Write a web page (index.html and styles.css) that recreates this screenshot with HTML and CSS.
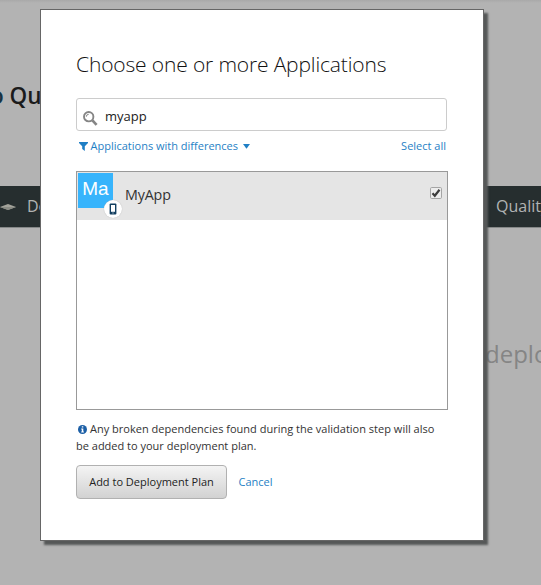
FILE: index.html
```html
<!DOCTYPE html>
<html lang="en">
<head>
<meta charset="utf-8">
<title>Choose one or more Applications</title>
<link rel="stylesheet" href="styles.css">
</head>
<body>
<div class="page">
  <header class="page-header"><span class="arrow-text">o</span> Qu</header>
  <nav class="nav">
    <svg class="diamond" width="16" height="8" viewBox="0 0 16 8"><path d="M0 4 8 1 16 4 8 7Z" fill="#a3a39b"/><path d="M0 4 8 7 16 4Z" fill="#898b84"/></svg>
    <span class="nav-first">De</span>
    <span class="nav-last">Quality</span>
  </nav>
  <main class="page-main">deploy</main>
</div>
<section class="modal" role="dialog">
  <h1 class="title">Choose one or more Applications</h1>
  <div class="search">
    <svg class="search-icon" width="16" height="16" viewBox="0 0 16 16" fill="none" stroke="#858585"><circle cx="5.700" cy="5.700" r="4.700" stroke-width="1.900"/><path d="M3.300 5.700A2.400 2.400 0 0 1 5.700 3.300" stroke-width="1"/><path d="m9.400 9.400 4.200 4.500" stroke-width="2.700"/></svg>
    <span class="query">myapp</span>
  </div>
  <div class="filters">
    <a class="filter"><svg class="funnel" width="9" height="9" viewBox="0 0 9 9"><path d="M0 0h9v1L5.800 4.300V9L3.200 7V4.300L0 1Z" fill="#1f7fc5"/></svg><span class="filter-label">Applications with differences</span><svg class="caret" width="7" height="5" viewBox="0 0 7 5"><path d="M0 0h7L3.500 4.800Z" fill="#1f7fc5"/></svg></a>
    <a class="select-all">Select all</a>
  </div>
  <div class="list">
    <div class="row">
      <div class="avatar">Ma
        <span class="badge"><svg width="8" height="12" viewBox="0 0 8 12"><rect x=".6" y=".6" width="6.800" height="10.800" rx="1" fill="#123f60"/><path d="M2 2h4v6.800H2z" fill="#fff"/><path d="M3.300 10h1.400" stroke="#fff" stroke-width=".7"/></svg></span>
      </div>
      <span class="app-name">MyApp</span>
      <svg class="check" width="12" height="12" viewBox="0 0 12 12"><rect x=".5" y=".5" width="11" height="11" rx="1.200" fill="#ededed" stroke="#a5a5a5"/><path d="m2.500 6.200 2.300 2.500 4.700-6" fill="none" stroke="#3c3c3c" stroke-width="2.200"/></svg>
    </div>
  </div>
  <p class="note"><svg class="info" width="9" height="9" viewBox="0 0 9 9"><circle cx="4.500" cy="4.500" r="4.500" fill="#1c5fa6"/><path d="M3.800 1.300h1.500v1.300H3.800zM3.200 3.500h2.100v3h.6v1H3.200v-1h.6v-2h-.6z" fill="#fff"/></svg><span class="note-first">Any broken dependencies found during the validation step will also</span><br><span class="note-second">be added to your deployment plan.</span></p>
  <div class="actions"><button class="submit">Add to Deployment Plan</button><a class="cancel">Cancel</a></div>
</section>
</body>
</html>
```
FILE: styles.css
```css
* { box-sizing: border-box; }
body { margin: 0; font-family: "Open Sans", sans-serif; color: #333; overflow: hidden; }
.page { width: 541px; height: 585px; overflow: hidden; background: linear-gradient(#a9a9a9, #b3b3b3 3px); }
.page-header { height: 186px; padding-top: 80px; margin-left: -10px; font-size: 22.500px; line-height: 32px; font-weight: 600; color: #1b1b1b; white-space: pre; }
.arrow-text { color: #173342; }
.nav { height: 42px; display: flex; align-items: center; background: #262e2f; border-bottom: 1px solid #858888; color: #b1b3b3; font-size: 16px; }
.diamond { flex: none; margin-top: 1px; }
.nav-first { margin: -1px 0 0 11px; width: 469px; flex: none; }
.nav-last { flex: none; margin-top: -1px; }
.page-main { padding: 109px 0 0 485px; font-size: 24px; line-height: 34px; color: #858585; }
.modal { position: absolute; left: 40px; top: 9px; width: 444px; height: 532px; padding: 41px 35px 0; background: #fff; border: 1px solid #666; box-shadow: 4px 4px 2px #565858; }
.title { margin: 0; font-size: 21px; line-height: 26px; letter-spacing: -.15px; font-weight: 300; white-space: nowrap; color: #111; }
.search { width: 371px; height: 33px; margin-top: 21px; padding-left: 6px; border: 1px solid #ccc; border-radius: 3px; display: flex; align-items: center; font-size: 13px; }
.search-icon { margin-top: 8px; }
.query { margin: 3px 0 0 6px; color: #222; }
.filters { width: 371px; display: flex; justify-content: space-between; height: 16px; margin-top: 7px; padding: 0 1px 0 3px; font-size: 11px; line-height: 16px; color: #1f7fc5; }
.filter { display: flex; align-items: center; }
.filter-label { margin-left: 2.500px; }
.caret { margin-left: 5px; }
.list { width: 372px; height: 239px; margin-top: 17px; border: 1px solid #999; }
.row { height: 48px; background: #e5e5e5; display: flex; align-items: flex-start; padding: 1px 5px 0 1px; }
.avatar { position: relative; width: 35px; height: 35px; background: #37b4fc; color: #fff; font: 19px/32px "Liberation Sans", sans-serif; text-align: center; }
.badge { position: absolute; left: 26px; top: 27px; width: 18px; height: 18px; border-radius: 50%; background: #fff; display: flex; align-items: center; justify-content: center; box-shadow: 0 0 1px #aaa; }
.app-name { margin: 12px auto 0 12px; font-size: 14.300px; line-height: 20px; letter-spacing: -.15px; }
.check { margin-top: 14px; }
.note { margin: 10px 0 0; font-size: 11px; line-height: 17px; white-space: nowrap; }
.info { margin: 0 3px 0 2px; vertical-align: -1px; }
.note-first { letter-spacing: .01px; }
.actions { display: flex; align-items: center; margin-top: 11px; font-size: 11px; }
.submit { width: 151px; height: 34px; padding: 0 0 2px; border: 1px solid #b1b1b1; border-radius: 4px; background: linear-gradient(#f4f4f4, #d2d2d2); font: inherit; color: #222; white-space: nowrap; }
.cancel { margin: -2px 0 0 11.500px; color: #1f7fc5; }
```
